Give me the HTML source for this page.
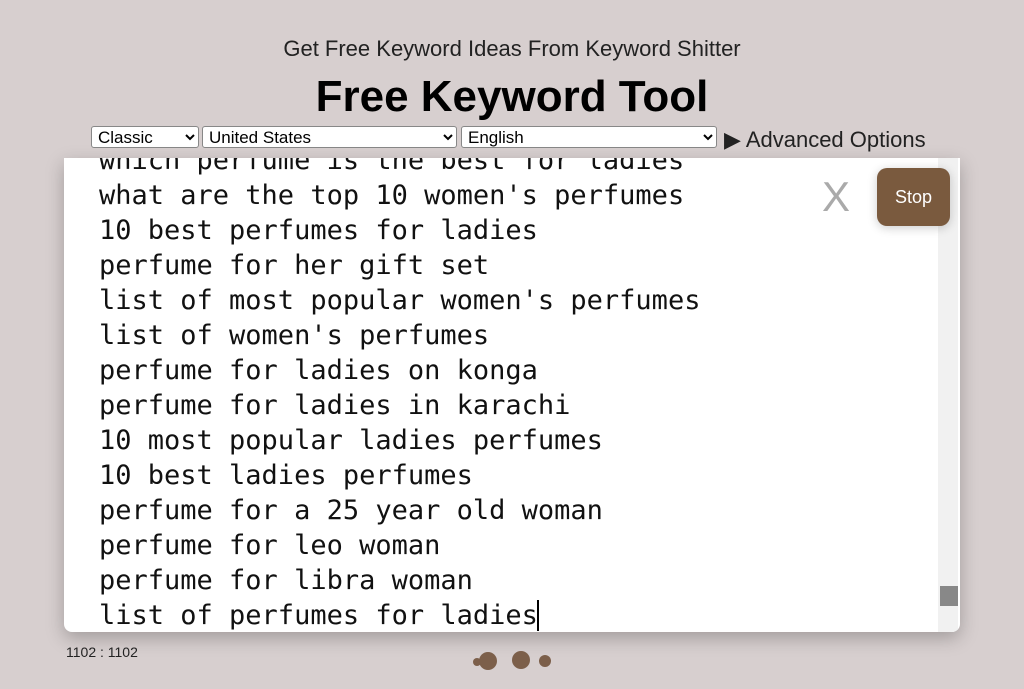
<!DOCTYPE html>
<html><head><meta charset="utf-8"><style>
body{margin:0;width:1024px;height:689px;background:#d7cfcf;font-family:"Liberation Sans",sans-serif;position:relative;overflow:hidden}
.sub{position:absolute;top:36px;left:0;width:1024px;text-align:center;font-size:22px;color:#222}
h1{position:absolute;top:72px;left:0;width:1024px;text-align:center;font-size:44px;margin:0;font-weight:bold;color:#000}
select{position:absolute;top:126px;height:22px;font-size:17px;font-family:"Liberation Sans",sans-serif;border:1px solid #888;border-radius:3px;background:#fff;padding:0 2px}
.adv{position:absolute;top:127px;left:724px;font-size:22px;color:#222}
.ta{position:absolute;left:64px;top:158px;width:896px;height:474px;background:#fff;border-radius:0 0 8px 8px;box-shadow:0 6px 18px rgba(0,0,0,.25);overflow:hidden}
.lines{position:absolute;left:35px;top:-15px;font-family:"DejaVu Sans Mono",monospace;font-size:27px;line-height:35px;color:#111;white-space:pre}
.sb{position:absolute;right:2px;top:0;width:20px;height:474px;background:#f1f1f1}
.thumb{position:absolute;left:2px;top:428px;width:18px;height:20px;background:#888}
.x{position:absolute;left:822px;top:173px;font-size:42px;color:#aaa}
.stop{position:absolute;left:877px;top:168px;width:73px;height:58px;background:#7a5a3e;border-radius:10px;color:#fff;font-size:18px;text-align:center;line-height:58px;box-shadow:0 2px 10px rgba(0,0,0,.2)}
.cnt{position:absolute;left:66px;top:644px;font-size:14px;color:#222}
.dot{position:absolute;background:#7c5f4a;border-radius:50%}
</style></head><body>
<div class="sub">Get Free Keyword Ideas From Keyword Shitter</div>
<h1>Free Keyword Tool</h1>
<select style="left:91px;width:108px"><option>Classic</option></select>
<select style="left:202px;width:255px"><option>United States</option></select>
<select style="left:461px;width:256px"><option>English</option></select>
<div class="adv">▶ Advanced Options</div>
<div class="ta"><div class="lines">which perfume is the best for ladies
what are the top 10 women's perfumes
10 best perfumes for ladies
perfume for her gift set
list of most popular women's perfumes
list of women's perfumes
perfume for ladies on konga
perfume for ladies in karachi
10 most popular ladies perfumes
10 best ladies perfumes
perfume for a 25 year old woman
perfume for leo woman
perfume for libra woman
list of perfumes for ladies<span style="border-left:2px solid #000;margin-left:-1px"></span></div>
<div class="sb"><div class="thumb"></div></div></div>
<div class="x">X</div>
<div class="stop">Stop</div>
<div class="cnt">1102 : 1102</div>
<div class="dot" style="left:473px;top:658px;width:8px;height:8px"></div>
<div class="dot" style="left:479px;top:652px;width:18px;height:18px"></div>
<div class="dot" style="left:512px;top:651px;width:18px;height:18px"></div>
<div class="dot" style="left:539px;top:655px;width:12px;height:12px"></div>
</body></html>
